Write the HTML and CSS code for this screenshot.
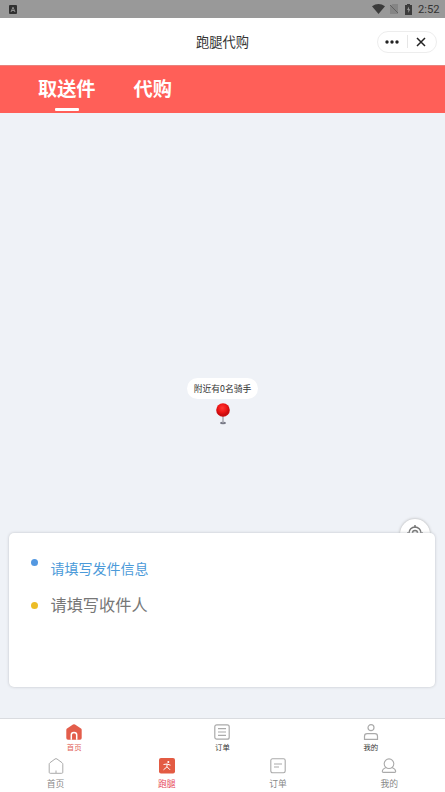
FILE: index.html
```html
<!DOCTYPE html>
<html lang="zh-CN">
<head>
<meta charset="utf-8">
<title>跑腿代购</title>
<link rel="stylesheet" href="styles.css">
</head>
<body>
<div class="app">
  <div class="status">
    <svg class="status-app" width="8" height="9" viewBox="0 0 8 9"><rect width="8" height="9" rx="1" fill="#303030"/><path d="M2 7 4 2.2 6 7M2.8 5.5h2.4" fill="none" stroke="#999" stroke-width=".9"/></svg>
    <div class="status-right">
      <svg width="13" height="10" viewBox="0 0 13 10"><path d="M0 2.200Q6.500-2 13 2.200L6.500 10Z" fill="#3b3b3b"/></svg>
      <svg width="8" height="10" viewBox="0 0 8 10"><path d="M2.500 0H8v10H0V2.500Z" fill="#858585"/><path d="M0 1 8 9" stroke="#606060"/></svg>
      <svg width="7" height="11" viewBox="0 0 7 11"><path d="M2 0h3v1h2v10H0V1h2Z" fill="#3b3b3b"/><path d="M4 2.500 2 6h1.300v3L5.200 5.300H4Z" fill="#999"/></svg>
      <span class="clock">2:52</span>
    </div>
  </div>
  <header class="header">
    <h1 class="title">跑腿代购</h1>
    <div class="capsule">
      <svg width="14" height="4" viewBox="0 0 14 4" fill="#222"><circle cx="2" cy="2" r="1.700"/><circle cx="7" cy="2" r="1.700"/><circle cx="12" cy="2" r="1.700"/></svg>
      <i class="divider"></i>
      <svg width="10" height="10" viewBox="0 0 10 10"><path d="m1 1 8 8M9 1 1 9" stroke="#222" stroke-width="1.500"/></svg>
    </div>
  </header>
  <nav class="tabs">
    <div class="tab active">取送件</div>
    <div class="tab">代购</div>
  </nav>
  <main class="map">
    <div class="marker">
      <div class="bubble">附近有0名骑手</div>
      <svg class="pin" width="16" height="22" viewBox="0 0 16 22">
        <defs><radialGradient id="ball" cx=".45" cy=".35"><stop offset="0" stop-color="#ff3832"/><stop offset=".65" stop-color="#ed1515"/><stop offset="1" stop-color="#c90c0f"/></radialGradient></defs>
        <ellipse cx="8" cy="20" rx="3" ry="1.300" fill="#777986"/><path d="M8 13v7" stroke="#a5a6ae" stroke-width="1.400"/><circle cx="8" cy="7" r="6.800" fill="url(#ball)"/>
      </svg>
    </div>
    <div class="locate"><svg width="16" height="16" viewBox="0 0 16 16" fill="none" stroke="#777" stroke-width="1.500"><circle cx="8" cy="8" r="6"/><circle cx="8" cy="8" r="2.500"/><path d="M8 0v3M8 13v3M0 8h3M13 8h3"/></svg></div>
    <section class="card">
      <div class="field sender"><i class="dot"></i><span>请填写发件信息</span></div>
      <div class="field receiver"><i class="dot"></i><span>请填写收件人</span></div>
    </section>
  </main>
  <footer class="footer">
    <nav class="nav primary">
      <div class="item red">
        <svg width="16" height="16" viewBox="0 0 16 16"><path d="M7 .6Q8 0 9 .6l6 4q.7.500.7 1.300V14q0 1.700-1.700 1.700H2Q.3 15.700.3 14V5.900Q.3 5.100 1 4.600Z" fill="#e35d4b"/><path d="M5.300 15.700v-5q0-2.300 2.700-2.300t2.700 2.300v5" fill="none" stroke="#fff" stroke-width="1.500"/></svg>
        <span>首页</span>
      </div>
      <div class="item">
        <svg width="16" height="16" viewBox="0 0 16 16" fill="none" stroke="#aaa" stroke-width="1.200"><rect x=".8" y=".8" width="14.400" height="14.400" rx="2"/><path d="M4 4.700h8M4 8h8M4 11.300h8"/></svg>
        <span>订单</span>
      </div>
      <div class="item">
        <svg width="16" height="16" viewBox="0 0 16 16" fill="none" stroke="#aaa" stroke-width="1.200"><circle cx="8" cy="3.700" r="3"/><path d="M1.500 15.300v-3q0-2.600 2.600-2.600h7.800q2.600 0 2.600 2.600v3Z"/></svg>
        <span>我的</span>
      </div>
    </nav>
    <nav class="nav secondary">
      <div class="item">
        <svg width="16" height="16" viewBox="0 0 16 16" fill="none" stroke="#aaa"><path d="M7 1q1-.7 2 0l5 3.700q.8.600.8 1.500v8.100q0 1-1 1H2.200q-1 0-1-1V6.200q0-.9.800-1.500ZM8 12.500v2.500"/></svg>
        <span>首页</span>
      </div>
      <div class="item red">
        <svg width="16" height="16" viewBox="0 0 16 16"><rect width="16" height="15.500" rx="2" fill="#e35b43"/><circle cx="9.300" cy="4" r="1" fill="#fff"/><path d="M4.500 6.500 8 6l3.500 1.200M8 6v2.800l-3.500 3M8 8.800l3 3" fill="none" stroke="#fff"/></svg>
        <span>跑腿</span>
      </div>
      <div class="item">
        <svg width="16" height="16" viewBox="0 0 16 16" fill="none" stroke="#aaa" stroke-width="1.100"><rect x=".8" y=".8" width="14.400" height="14" rx="1.700"/><path d="M4 6h8M4 9h5"/></svg>
        <span>订单</span>
      </div>
      <div class="item">
        <svg width="16" height="16" viewBox="0 0 16 16" fill="none" stroke="#aaa" stroke-width="1.100"><circle cx="8" cy="5.700" r="4.800"/><path d="M5 9.500Q1.300 11 1.300 13.500q0 .9 1 .9h11.400q1 0 1-.9Q14.700 11 11 9.500"/></svg>
        <span>我的</span>
      </div>
    </nav>
  </footer>
</div>
</body>
</html>
```
FILE: styles.css
```css
* { box-sizing: border-box; }
body {
  margin: 0;
  font-family: "Noto Sans CJK SC", sans-serif;
}
svg { display: block; flex: none; }
.app {
  width: 445px;
  height: 792px;
  display: flex;
  flex-direction: column;
  overflow: hidden;
  background: #fff;
}
.status {
  height: 18px;
  flex: none;
  display: flex;
  align-items: center;
  justify-content: space-between;
  padding: 0 6px 0 9px;
  background: #999;
}
.status-right { display: flex; align-items: center; gap: 5px; }
.clock {
  margin-left: 1px;
  font: 11.2px/18px Roboto, sans-serif;
  color: #333;
  width: 21px;
  padding-top: 1px;
  white-space: nowrap;
}
.status-right svg:nth-child(2) { margin-right: 2px; }
.header {
  height: 47px;
  flex: none;
  display: grid;
  grid-template-columns: 68px 1fr 68px;
  align-items: center;
}
.title {
  grid-column: 2;
  margin: 0;
  text-align: center;
  font-size: 13.3px;
  line-height: 20px;
  font-weight: 400;
  color: #333;
  padding-top: 1px;
}
.capsule {
  width: 60px;
  height: 22px;
  display: flex;
  align-items: center;
  justify-content: space-between;
  padding: 0 10px 0 7px;
  border: 1px solid #ededed;
  border-radius: 11px;
}
.divider { width: 1px; height: 13px; background: #e6e6e6; }
.tabs {
  height: 48px;
  flex: none;
  display: flex;
  gap: 38px;
  padding-left: 38px;
  background: #ff5f58;
  border-top: 1px solid #e8827d;
}
.tab {
  display: flex;
  flex-direction: column;
  align-items: center;
  font-size: 19.2px;
  line-height: 42px;
  padding-top: 1px;
  font-weight: 700;
  color: #fff;
}
.active::after {
  content: "";
  width: 24px;
  height: 3px;
  margin-top: -1px;
  border-radius: 1px;
  background: #fff;
}
.map {
  flex: 1;
  position: relative;
  display: flex;
  flex-direction: column;
  justify-content: flex-end;
  padding: 0 10px 31px 9px;
  background: #eff2f7;
}
.marker {
  position: absolute;
  top: 265px;
  left: 187px;
  width: 71px;
  display: flex;
  flex-direction: column;
  align-items: center;
}
.bubble {
  width: 71px;
  height: 21px;
  border-radius: 11px;
  background: #fff;
  font-size: 8.8px;
  line-height: 21px;
  text-align: center;
  white-space: nowrap;
  color: #333;
}
.pin { margin-top: 4px; }
.locate {
  position: absolute;
  top: 406px;
  left: 400px;
  width: 30px;
  height: 30px;
  display: grid;
  place-items: center;
  padding-bottom: 3px;
  border-radius: 50%;
  background: #fff;
  box-shadow: 0 0 3px #aaa;
}
.card {
  position: relative;
  height: 154px;
  padding: 25px 22px;
  border-radius: 5px;
  background: #fff;
  box-shadow: 0 0 3px #bfc2c7;
}
.field { display: flex; align-items: center; gap: 13px; }
.dot { width: 7px; height: 7px; margin-left: -.5px; border-radius: 50%; }
.sender { height: 20px; font-size: 14px; line-height: 20px; color: #4b9ad9; }
.sender .dot { background: #5398e1; margin-bottom: 12px; }
.receiver { height: 24px; margin-top: 14px; font-size: 16.2px; line-height: 24px; color: #777; }
.receiver .dot { background: #ecbd27; margin-top: 2px; }
.footer {
  height: 74px;
  flex: none;
  border-top: 1px solid #dadce0;
  background: #fff;
}
.nav { display: flex; }
.item {
  flex: 1;
  display: flex;
  flex-direction: column;
  align-items: center;
}
.primary { height: 38px; padding-top: 5px; font-size: 7.4px; line-height: 10px; color: #333; }
.primary span { margin-top: 2px; }
.secondary { padding-top: 1px; font-size: 8.8px; line-height: 12px; color: #888; }
.secondary span { margin-top: 4px; }
.primary .red { color: #df6258; }
.secondary .red { color: #e74b5b; }
```
